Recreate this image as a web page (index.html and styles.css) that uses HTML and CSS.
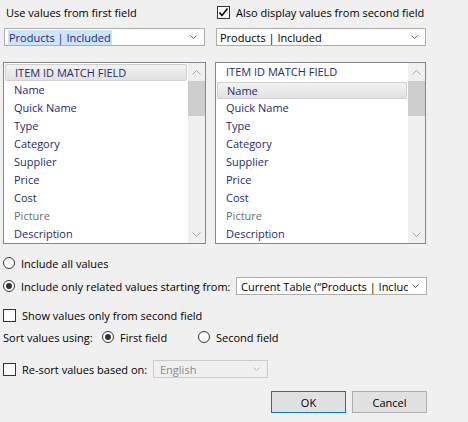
FILE: index.html
```html
<!DOCTYPE html>
<html>
<head>
<meta charset="utf-8">
<link rel="stylesheet" href="styles.css">
</head>
<body>
<div class="dlg">
  <div class="cols">
    <div class="col col-left">
      <div class="label-row"><span class="lbl">Use values from first field</span></div>
      <div class="combo combo-left">
        <span class="combo-text"><span class="hl">Products | Included</span></span>
        <svg class="arrow" width="7" height="5" viewBox="0 0 7 5"><polyline points="0.5,0.5 3.5,3.5 6.5,0.5" fill="none" stroke="#606060" stroke-width="1"/></svg>
      </div>
      <div class="list list-left">
        <div class="items">
          <div class="item sel">ITEM ID MATCH FIELD</div>
          <div class="item">Name</div>
          <div class="item">Quick Name</div>
          <div class="item">Type</div>
          <div class="item">Category</div>
          <div class="item">Supplier</div>
          <div class="item">Price</div>
          <div class="item">Cost</div>
          <div class="item dim">Picture</div>
          <div class="item">Description</div>
        </div>
        <div class="sbar">
          <div class="sbtn"><svg width="9" height="5" viewBox="0 0 9 5"><polyline points="0.5,4.5 4.5,0.5 8.5,4.5" fill="none" stroke="#a6a6a6" stroke-width="1"/></svg></div>
          <div class="thumb"></div>
          <div class="track"></div>
          <div class="sbtn"><svg width="9" height="5" viewBox="0 0 9 5"><polyline points="0.5,0.5 4.5,4.5 8.5,0.5" fill="none" stroke="#a6a6a6" stroke-width="1"/></svg></div>
        </div>
      </div>
    </div>
    <div class="col col-right">
      <div class="label-row">
        <span class="cb"><svg width="11" height="11" viewBox="0 0 11 11"><polyline points="1.5,5.5 4,8.5 9.5,1.5" fill="none" stroke="#000" stroke-width="1.6"/></svg></span>
        <span class="lbl cb-lbl">Also display values from second field</span>
      </div>
      <div class="combo combo-right">
        <span class="combo-text">Products | Included</span>
        <svg class="arrow" width="7" height="5" viewBox="0 0 7 5"><polyline points="0.5,0.5 3.5,3.5 6.5,0.5" fill="none" stroke="#606060" stroke-width="1"/></svg>
      </div>
      <div class="list list-right">
        <div class="items">
          <div class="item">ITEM ID MATCH FIELD</div>
          <div class="item sel">Name</div>
          <div class="item">Quick Name</div>
          <div class="item">Type</div>
          <div class="item">Category</div>
          <div class="item">Supplier</div>
          <div class="item">Price</div>
          <div class="item">Cost</div>
          <div class="item dim">Picture</div>
          <div class="item">Description</div>
        </div>
        <div class="sbar">
          <div class="sbtn"><svg width="9" height="5" viewBox="0 0 9 5"><polyline points="0.5,4.5 4.5,0.5 8.5,4.5" fill="none" stroke="#a6a6a6" stroke-width="1"/></svg></div>
          <div class="thumb"></div>
          <div class="track"></div>
          <div class="sbtn"><svg width="9" height="5" viewBox="0 0 9 5"><polyline points="0.5,0.5 4.5,4.5 8.5,0.5" fill="none" stroke="#a6a6a6" stroke-width="1"/></svg></div>
        </div>
      </div>
    </div>
  </div>

  <div class="row row-all">
    <span class="radio"></span><span class="lbl">Include all values</span>
  </div>
  <div class="row row-related">
    <div class="grp grp-related"><span class="radio on"></span><span class="lbl">Include only related values starting from:</span></div>
    <div class="combo combo-table">
      <span class="combo-text clip">Current Table (“Products | Included”)</span>
      <svg class="arrow" width="7" height="5" viewBox="0 0 7 5"><polyline points="0.5,0.5 3.5,3.5 6.5,0.5" fill="none" stroke="#606060" stroke-width="1"/></svg>
    </div>
  </div>
  <div class="row row-show">
    <span class="cb"></span><span class="lbl cb-lbl">Show values only from second field</span>
  </div>
  <div class="row row-sort">
    <span class="lbl sort-lbl">Sort values using:</span>
    <div class="grp grp-first"><span class="radio on"></span><span class="lbl">First field</span></div>
    <div class="grp"><span class="radio"></span><span class="lbl">Second field</span></div>
  </div>
  <div class="row row-resort">
    <div class="grp grp-resort"><span class="cb"></span><span class="lbl cb-lbl">Re-sort values based on:</span></div>
    <div class="combo combo-lang">
      <span class="combo-text">English</span>
      <svg class="arrow" width="7" height="5" viewBox="0 0 7 5"><polyline points="0.5,0.5 3.5,3.5 6.5,0.5" fill="none" stroke="#b5b5b5" stroke-width="1"/></svg>
    </div>
  </div>
  <div class="buttons">
    <div class="btn btn-default">OK</div>
    <div class="btn">Cancel</div>
  </div>
</div>
</body>
</html>
```
FILE: styles.css
```css
html, body {
  margin: 0;
  padding: 0;
  background: #f0f0f0;
}
.dlg {
  width: 468px;
  height: 422px;
  box-sizing: border-box;
  padding-left: 3px;
  font-family: "Open Sans", "Noto Sans", sans-serif;
  font-size: 11px;
  color: #000;
  overflow: hidden;
}
.cols {
  display: flex;
  gap: 9px;
}
.col-left { width: 203px; }
.col-right { width: 211px; }
.label-row {
  height: 25px;
  display: flex;
  align-items: center;
}
.col-left .label-row { padding-left: 3px; }
.lbl { white-space: nowrap; }
.cb {
  width: 13px;
  height: 13px;
  box-sizing: border-box;
  border: 1px solid #333;
  background: #fff;
  display: inline-flex;
  align-items: center;
  justify-content: center;
  flex: none;
}
.col-right .cb { margin-left: 2px; margin-top: 0px; }
.cb-lbl { margin-left: 6px; }
.combo {
  height: 18px;
  box-sizing: border-box;
  border: 1px solid #adadad;
  background: #fff;
  display: flex;
  align-items: center;
  padding-left: 3px;
  padding-right: 7px;
  margin-top: 3px;
}
.combo-text {
  flex: 1;
  white-space: nowrap;
  overflow: hidden;
  color: #000;
}
.hl {
  background: #cce4f7;
  color: #1a2a6e;
  padding: 1px 1px;
}
.arrow { flex: none; margin-left: 4px; }
.combo-left { margin-left: 1px; width: 201px; }
.combo-right { margin-left: 1px; width: 210px; }
.list {
  margin-top: 16px;
  height: 182px;
  box-sizing: border-box;
  border: 1px solid #828790;
  background: #fff;
  display: flex;
}
.items {
  flex: 1;
  display: flex;
  flex-direction: column;
}
.item {
  height: 18px;
  line-height: 18px;
  padding-left: 10px;
  color: #1c2c6c;
  white-space: nowrap;
  box-sizing: border-box;
}
.item.dim { color: #6d6d6d; }
.item.sel {
  margin: 1px 1px 0 1px;
  height: 17px;
  line-height: 16px;
  padding-left: 9px;
  border: 1px solid #d0d0d0;
  border-radius: 2px;
  background: linear-gradient(#f2f2f2, #e2e2e2);
}
.sbar {
  width: 17px;
  display: flex;
  flex-direction: column;
  background: #f0f0f0;
}
.sbtn {
  height: 18px;
  display: flex;
  align-items: center;
  justify-content: center;
}
.thumb {
  height: 35px;
  background: #cdcdcd;
}
.track { flex: 1; }
.row {
  display: flex;
  align-items: center;
}
.radio {
  width: 12px;
  height: 12px;
  box-sizing: border-box;
  border: 1px solid #333;
  border-radius: 50%;
  background: #fff;
  flex: none;
  margin-right: 6px;
  display: inline-flex;
  align-items: center;
  justify-content: center;
}
.radio.on::after {
  content: "";
  width: 6px;
  height: 6px;
  border-radius: 50%;
  background: #333;
}
.grp {
  display: flex;
  align-items: center;
}
.row-all { margin-top: 10px; height: 18px; }
.row-related { margin-top: 4px; height: 20px; }
.grp-related { width: 233px; }
.combo-table { margin-top: 0; width: 191px; padding-left: 4px; }
.row-show { margin-top: 10px; height: 19px; }
.row-sort { margin-top: 3px; height: 18px; }
.sort-lbl { width: 99px; }
.grp-first { width: 96px; }
.row-resort { margin-top: 14px; height: 18px; }
.grp-resort { width: 150px; }
.combo-lang {
  margin-top: 0;
  width: 115px;
  background: #f0f0f0;
  border-color: #cccccc;
  padding-left: 6px;
}
.combo-lang .combo-text { color: #8a8a8a; }
.buttons {
  margin-top: 13px;
  display: flex;
  justify-content: flex-end;
  gap: 6px;
  padding-right: 41px;
}
.btn {
  width: 75px;
  height: 22px;
  box-sizing: border-box;
  border: 1px solid #adadad;
  background: #e1e1e1;
  display: flex;
  align-items: center;
  justify-content: center;
}
.btn-default {
  border-color: #0078d7;
}
```
